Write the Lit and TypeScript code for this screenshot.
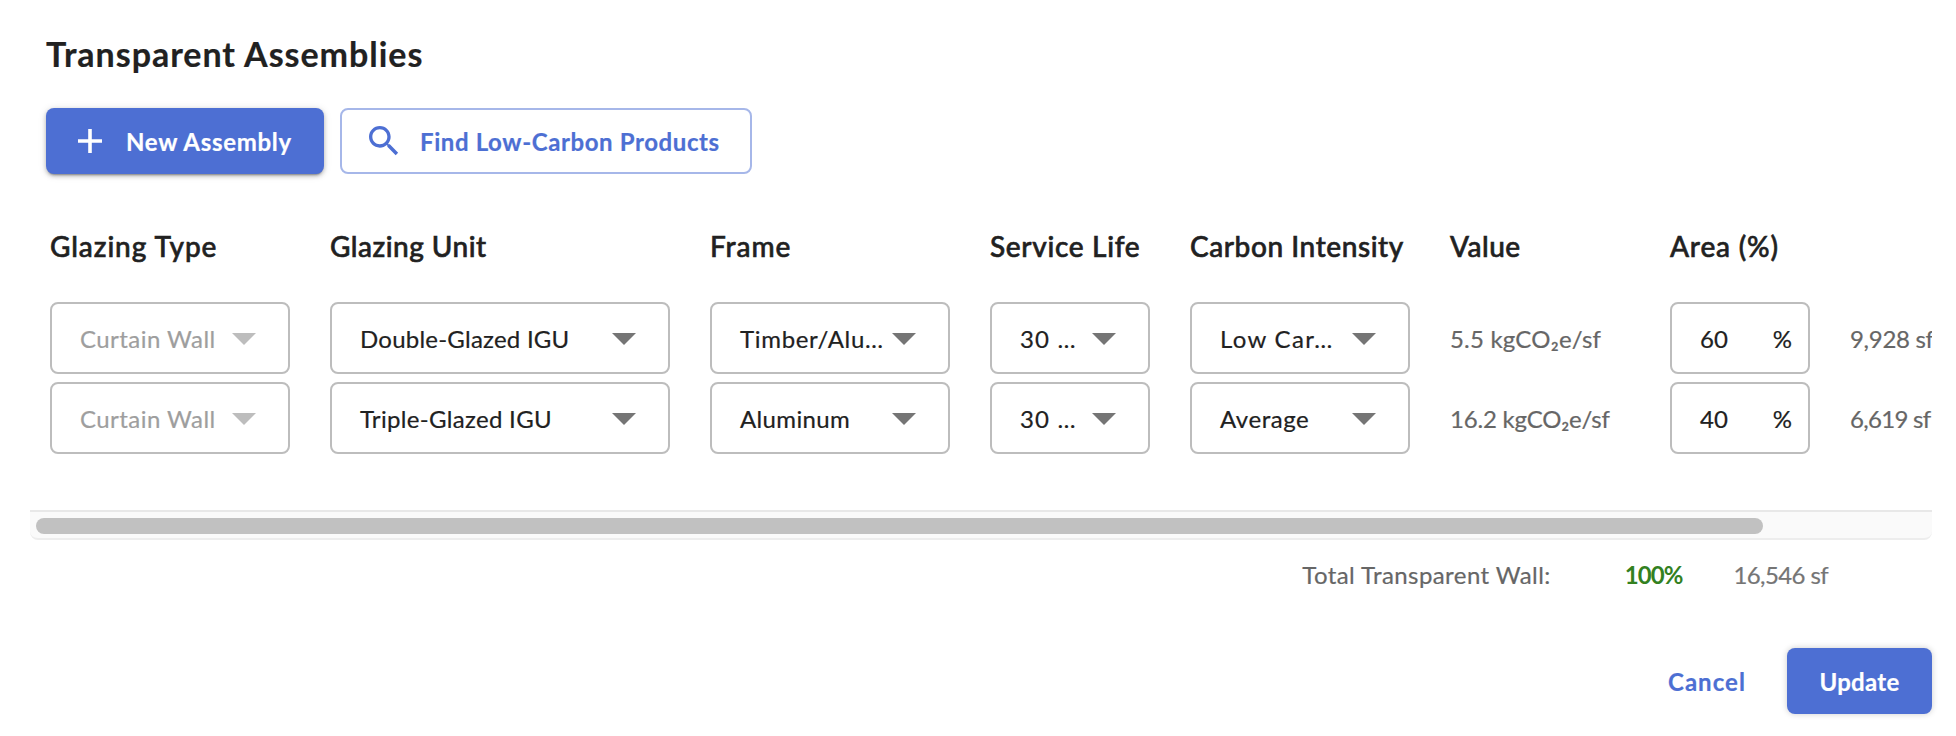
import { LitElement, html, css, svg } from 'lit';
import { customElement } from 'lit/decorators.js';
import { classMap } from 'lit/directives/class-map.js';

/** A label with its own tracking, in pixels. */
type Label = [text: string, tracking?: number];

interface Row {
  selects: Label[];
  value: Label;
  area: string;
  size: Label;
}

const headers: Label[] = [
  ['Glazing Type', 0.92], ['Glazing Unit', 0.49], ['Frame', 0.92], ['Service Life', 0.68],
  ['Carbon Intensity', 0.57], ['Value', 0.5], ['Area (%)', 0.82],
];

const rows: Row[] = [
  {
    selects: [['Curtain Wall', 0.45], ['Double-Glazed IGU', 0.23], ['Timber/Alu…', 0.68], ['30 …', 1.2], ['Low Car…', 1.3]],
    value: ['5.5 kgCO₂e/sf', 0.2], area: '60', size: ['9,928 sf', -0.3],
  },
  {
    selects: [['Curtain Wall', 0.45], ['Triple-Glazed IGU', 0.32], ['Aluminum', 0.35], ['30 …', 1.2], ['Average', 0.54]],
    value: ['16.2 kgCO₂e/sf', -0.2], area: '40', size: ['6,619 sf', -0.7],
  },
];

const text = ([value, tracking = 0]: Label) =>
  html`<span style="letter-spacing:${tracking}px">${value}</span>`;

@customElement('app-root')
export class AppRoot extends LitElement {
  static styles = css`
    :host {
      display: block;
      box-sizing: border-box;
      height: 736px;
      overflow: hidden;
      background: #fff;
      color: #212121;
      font: 400 24px/32px Lato, "Open Sans", sans-serif;
      padding: 31px 24px 22px 30px;
    }
    * { box-sizing: border-box; }
    span { display: inline-block; vertical-align: top; white-space: nowrap; padding-top: 2px; -webkit-text-stroke: 0.2px currentColor; }
    .page { display: flex; flex-direction: column; height: 100%; }
    h1 { margin: 0 0 0 16px; font-size: 34px; line-height: 42px; font-weight: 700; }
    .actions { display: flex; gap: 16px; margin: 33px 0 0 16px; }
    button {
      display: flex; align-items: center; height: 66px; margin: 0; border: 0;
      border-radius: 8px; font: inherit; font-weight: 700; color: #4d6fd3; background: none;
    }
    .primary {
      background: #4d6fd3; color: #fff;
      box-shadow: 0 3px 2px -2px rgba(0,0,0,.3), 0 2px 4px rgba(0,0,0,.22), 0 1px 8px rgba(0,0,0,.12);
    }
    .new { width: 278px; padding: 0 0 0 26px; gap: 18px; }
    .find { width: 412px; padding: 0 0 0 22px; gap: 16px; border: 2px solid #a6b7e9; }
    .new svg { width: 36px; height: 36px; flex: none; }
    .find svg { width: 40px; height: 40px; flex: none; }
    .scroller { overflow: hidden; margin-top: 49px; padding-left: 20px; height: 287px; }
    .grid {
      display: grid; width: 1960px; column-gap: 40px; row-gap: 8px;
      grid-template-columns: 240px 340px 240px 160px 220px 180px 140px 200px;
      grid-template-rows: 71px 72px 72px;
      align-items: center;
    }
    .head { align-self: start; font-size: 28px; line-height: 42px; font-weight: 500; }
    .head span { -webkit-text-stroke: 0.6px currentColor; }
    .head.last { grid-column: span 2; }
    .row { display: contents; }
    .select, .field {
      display: flex; align-items: center; justify-content: space-between;
      height: 72px; border: 2px solid #bdbdbd; border-radius: 8px; padding: 0 32px 0 28px;
    }
    .arrow { width: 24px; height: 12px; flex: none; fill: #757575; margin: 2px 0 0 -8px; }
    .disabled { color: #9e9e9e; }
    .disabled .arrow { fill: #bdbdbd; }
    .field { padding: 0 16px 0 28px; }
    .muted { color: #666; }
    .track {
      flex: none; height: 30px; padding: 6px;
      background: #fafafa; border-top: 2px solid #e8e8e8; border-bottom: 2px solid #ededed;
      border-radius: 0 0 8px 8px;
    }
    .thumb { width: 1727px; height: 16px; border-radius: 8px; background: #c1c1c1; }
    .totals { display: flex; justify-content: flex-end; margin: 17px 104px 0 0; }
    .percent { color: #33811f; font-weight: 700; margin: 0 51px 0 74px; }
    .percent span { -webkit-text-stroke: 0; }
    .size { color: #757575; }
    .footer { display: flex; justify-content: flex-end; gap: 41px; margin-top: 57px; height: 66px; }
    .footer button { padding: 0; }
    .footer .primary { width: 145px; justify-content: center; box-shadow: 0 0 6px rgba(0,0,0,.2); }
  `;

  private arrow = svg`<svg class="arrow" viewBox="0 0 24 12"><path d="M0 0h24L12 12z"/></svg>`;

  private renderRow(row: Row) {
    return html`<div class="row">
      ${row.selects.map((label, i) => html`
        <div class=${classMap({ select: true, disabled: i === 0 })}>${text(label)}${this.arrow}</div>`)}
      <div class="muted">${text(row.value)}</div>
      <div class="field">${text([row.area])}${text(['%'])}</div>
      <div class="muted">${text(row.size)}</div>
    </div>`;
  }

  render() {
    return html`<div class="page">
      <h1>${text(['Transparent Assemblies', 0.97])}</h1>
      <div class="actions">
        <button class="primary new">
          <svg viewBox="0 0 36 36"><path d="M18 6v24M6 18h24" stroke="#fff" stroke-width="3.6" fill="none"/></svg>
          ${text(['New Assembly', 0.7])}
        </button>
        <button class="find">
          <svg viewBox="0 0 24 24" fill="#4d6fd3"><path d="M15.5 14h-.79l-.28-.27C15.41 12.59 16 11.11 16 9.5 16 5.91 13.09 3 9.5 3S3 5.91 3 9.5 5.91 16 9.5 16c1.61 0 3.09-.59 4.23-1.57l.27.28v.79l5 4.99L20.49 19l-4.99-5zm-6 0C7.01 14 5 11.99 5 9.5S7.01 5 9.5 5 14 7.01 14 9.5 11.99 14 9.5 14z"/></svg>
          ${text(['Find Low-Carbon Products', 0.6])}
        </button>
      </div>
      <div class="scroller">
        <div class="grid">
          ${headers.map((h, i) => html`<div class=${classMap({ head: true, last: i === 6 })}>${text(h)}</div>`)}
          ${rows.map((r) => this.renderRow(r))}
        </div>
      </div>
      <div class="track"><div class="thumb"></div></div>
      <div class="totals">
        <div class="muted">${text(['Total Transparent Wall:', 0.42])}</div>
        <div class="percent">${text(['100%', -0.92])}</div>
        <div class="size">${text(['16,546 sf', -0.6])}</div>
      </div>
      <div class="footer">
        <button>${text(['Cancel', 1.05])}</button>
        <button class="primary">${text(['Update', 0.3])}</button>
      </div>
    </div>`;
  }
}
